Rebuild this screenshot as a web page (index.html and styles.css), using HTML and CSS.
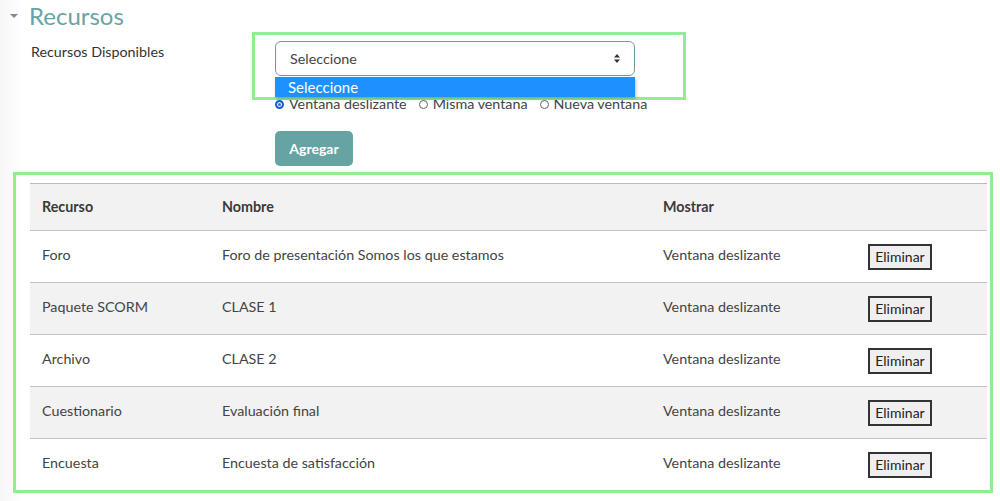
FILE: index.html
```html
<!doctype html>
<html lang="es">

<head>
  <meta charset="UTF-8">
  <title>Recursos</title>
  <link rel="stylesheet" href="styles.css">
</head>

<body>

  <div class="page">
    <h2 class="section-title"><span class="caret"></span>Recursos</h2>

    <div class="form-row">
      <label class="form-label">Recursos Disponibles</label>
      <div class="form-field">
        <div class="select-wrap">
          <div class="select">
            <span>Seleccione</span>
            <svg class="select-arrows" width="6" height="9" viewBox="0 0 6 9">
              <path d="M3 0 L6 3.5 L0 3.5 Z M3 9 L6 5.5 L0 5.5 Z" fill="#333" />
            </svg>
          </div>
          <ul class="select-list">
            <li class="active">Seleccione</li>
          </ul>
        </div>

        <div class="radios">
          <label><span class="radio checked"></span>Ventana deslizante</label>
          <label><span class="radio"></span>Misma ventana</label>
          <label><span class="radio"></span>Nueva ventana</label>
        </div>

        <button class="btn-add">Agregar</button>
      </div>
    </div>

    <table class="res-table">
      <thead>
        <tr>
          <th class="c1">Recurso</th>
          <th class="c2">Nombre</th>
          <th class="c3">Mostrar</th>
          <th class="c4"></th>
        </tr>
      </thead>
      <tbody>
        <tr>
          <td>Foro</td>
          <td>Foro de presentación Somos los que estamos</td>
          <td>Ventana deslizante</td>
          <td><button class="btn-del">Eliminar</button></td>
        </tr>
        <tr>
          <td>Paquete SCORM</td>
          <td>CLASE 1</td>
          <td>Ventana deslizante</td>
          <td><button class="btn-del">Eliminar</button></td>
        </tr>
        <tr>
          <td>Archivo</td>
          <td>CLASE 2</td>
          <td>Ventana deslizante</td>
          <td><button class="btn-del">Eliminar</button></td>
        </tr>
        <tr>
          <td>Cuestionario</td>
          <td>Evaluación final</td>
          <td>Ventana deslizante</td>
          <td><button class="btn-del">Eliminar</button></td>
        </tr>
        <tr>
          <td>Encuesta</td>
          <td>Encuesta de satisfacción</td>
          <td>Ventana deslizante</td>
          <td><button class="btn-del">Eliminar</button></td>
        </tr>
      </tbody>
    </table>

    <!-- marcos de resaltado -->
    <div class="mark mark-select"></div>
    <div class="mark mark-table"></div>
  </div>

</body>

</html>
```

FILE: styles.css
```css
* {
  margin: 0px;
  padding: 0px;
  box-sizing: border-box;
}

body {
  font-family: Lato, "Open Sans", sans-serif;
  font-size: 14.3px;
  color: #333;
  background: linear-gradient(to right, #f7f7f7 0px, #fbfbfb 12px, #fff 24px);
}

.page {
  position: relative;
  height: 501px;
  padding: 3px 0 0 13px;
}

.section-title {
  display: flex;
  align-items: center;
  font-weight: normal;
  font-size: 24px;
  line-height: 26px;
  color: #6aa3a3;
  height: 26px;
}

.caret {
  width: 0;
  height: 0;
  border-left: 4px solid transparent;
  border-right: 4px solid transparent;
  border-top: 4px solid #888;
  margin: 0 11px 0 -3px;
}

.form-row {
  display: flex;
  padding-left: 18px;
  margin-top: 12px;
}

.form-label {
  width: 244px;
  line-height: 18px;
  padding-top: 2px;
  color: #333;
}

.form-field {
  width: 400px;
}

.select-wrap {
  position: relative;
  width: 360px;
}

.select {
  display: flex;
  justify-content: space-between;
  align-items: center;
  height: 35px;
  padding: 0 14px 0 14px;
  border: 1px solid #6e9a9a;
  border-radius: 6px;
  background: #fff;
  color: #444;
}

.select-list {
  list-style: none;
  position: absolute;
  left: 0;
  top: 36px;
  width: 360px;
  background: #fff;
  box-shadow: 1px 2px 3px rgba(0, 0, 0, .25);
  z-index: 2;
}

.select-list li {
  height: 20px;
  line-height: 20px;
  padding-left: 13px;
  font-size: 15px;
}

.select-list li.active {
  background: #1e90ff;
  color: #fff;
}

.radios {
  display: flex;
  gap: 12px;
  margin-top: 20px;
  line-height: 16px;
  color: #444;
}

.radios label {
  display: flex;
  align-items: center;
}

.radio {
  width: 9px;
  height: 9px;
  border: 1px solid #666;
  border-radius: 50%;
  margin-right: 5px;
}

.radio.checked {
  border: 2px solid #1a5fd0;
  background: #2b6fe0;
  box-shadow: inset 0 0 0 1px #fff;
}

.btn-add {
  display: block;
  margin-top: 19px;
  width: 78px;
  height: 35px;
  border: 0;
  border-radius: 5px;
  background: #66a4a4;
  color: #fff;
  font-family: Lato, sans-serif;
  font-weight: bold;
  font-size: 14px;
}

.res-table {
  margin: 17px 0 0 17px;
  width: 957px;
  border-collapse: collapse;
  border-top: 1px solid #bbb;
}

.res-table th,
.res-table td {
  text-align: left;
  height: 52px;
  padding: 0 12px 5px;
  border-bottom: 1px solid #c4c4c4;
  vertical-align: middle;
  color: #444;
}

.res-table td:last-child {
  padding-bottom: 0;
}

.res-table th {
  height: 47px;
  padding-bottom: 2px;
  font-weight: bold;
  color: #3a3a3a;
}

.res-table .c1 {
  width: 180px;
}

.res-table .c2 {
  width: 441px;
}

.res-table .c3 {
  width: 205px;
}

.res-table thead tr,
.res-table tbody tr:nth-child(even) {
  background: #f2f2f2;
}

.btn-del {
  height: 26px;
  width: 64px;
  border: 2px solid #333;
  background: #efefef;
  font-family: Lato, sans-serif;
  font-size: 14px;
  color: #222;
}

.mark {
  position: absolute;
  border: 3px solid #90ee90;
  pointer-events: none;
}

.mark-select {
  left: 252px;
  top: 32px;
  width: 434px;
  height: 68px;
}

.mark-table {
  left: 13px;
  top: 172px;
  width: 980px;
  height: 321px;
}
```
